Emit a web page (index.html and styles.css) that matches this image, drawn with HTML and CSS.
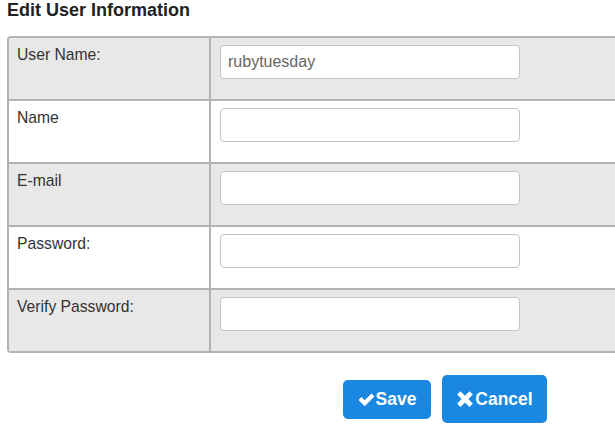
FILE: index.html
```html
<!DOCTYPE html>
<html>
<head>
<meta charset="utf-8">
<link rel="stylesheet" href="styles.css">
</head>
<body>
<h1 class="title">Edit User Information</h1>
<div class="form">
  <div class="row shaded">
    <div class="label">User Name:</div>
    <div class="field"><input class="input" type="text" value="rubytuesday"></div>
  </div>
  <div class="row">
    <div class="label">Name</div>
    <div class="field"><input class="input" type="text"></div>
  </div>
  <div class="row shaded">
    <div class="label">E-mail</div>
    <div class="field"><input class="input" type="text"></div>
  </div>
  <div class="row">
    <div class="label">Password:</div>
    <div class="field"><input class="input" type="password"></div>
  </div>
  <div class="row shaded">
    <div class="label">Verify Password:</div>
    <div class="field"><input class="input" type="password"></div>
  </div>
</div>
<div class="actions">
  <button class="btn btn-save"><svg class="ico" viewBox="0 0 16 16" width="17" height="17"><path d="M0.5 8.5 L3.3 5.7 L6.3 8.7 L12.7 2.3 L15.5 5.1 L6.3 14.3 Z" fill="#fff"/></svg>Save</button>
  <button class="btn btn-cancel"><svg class="ico" viewBox="0 0 16 16" width="18" height="18"><path d="M1 4 L4 1 L8 5 L12 1 L15 4 L11 8 L15 12 L12 15 L8 11 L4 15 L1 12 L5 8 Z" fill="#fff"/></svg>Cancel</button>
</div>
</body>
</html>
```
FILE: styles.css
```css
html, body {
  margin: 0;
  padding: 0;
  background: #fff;
  overflow: hidden;
  font-family: "Liberation Sans", Arial, sans-serif;
  color: #333;
}
.title {
  margin: 0 0 0 7px;
  font-size: 18px;
  line-height: 20px;
  font-weight: bold;
  color: #222;
  height: 36px;
}
.form {
  margin-left: 7px;
  width: 660px;
  border: 2px solid #b3b3b3;
  border-radius: 4px;
  overflow: hidden;
}
.row {
  display: grid;
  grid-template-columns: 202px 1fr;
  background: #fff;
}
.row + .row {
  border-top: 2px solid #b3b3b3;
}
.row.shaded {
  background: #e8e8e8;
}
.label {
  border-right: 2px solid #b3b3b3;
  padding: 8px 0 0 8px;
  font-size: 15.7px;
  line-height: 18px;
  color: #333;
  height: 53px;
}
.field {
  padding: 7px 0 0 9px;
  height: 54px;
}
.input {
  box-sizing: border-box;
  width: 300px;
  height: 34px;
  margin: 0;
  border: 1px solid #c4c4c4;
  border-radius: 4px;
  background: #fff;
  padding: 0 7px;
  font-family: "Liberation Sans", Arial, sans-serif;
  font-size: 16px;
  color: #666;
  outline: none;
}
.actions {
  display: flex;
  align-items: center;
  gap: 11px;
  padding-left: 343px;
  margin-top: 22px;
}
.btn {
  display: flex;
  align-items: center;
  justify-content: center;
  border: none;
  border-radius: 5px;
  background: #1a88e0;
  color: #fff;
  font-family: "Liberation Sans", Arial, sans-serif;
  font-weight: bold;
  font-size: 17.5px;
  padding: 0;
  margin: 0;
}
.btn-save {
  width: 88px;
  height: 39px;
}
.btn-cancel {
  width: 105px;
  height: 48px;
}
.ico {
  display: block;
  margin-right: 1px;
}
```
